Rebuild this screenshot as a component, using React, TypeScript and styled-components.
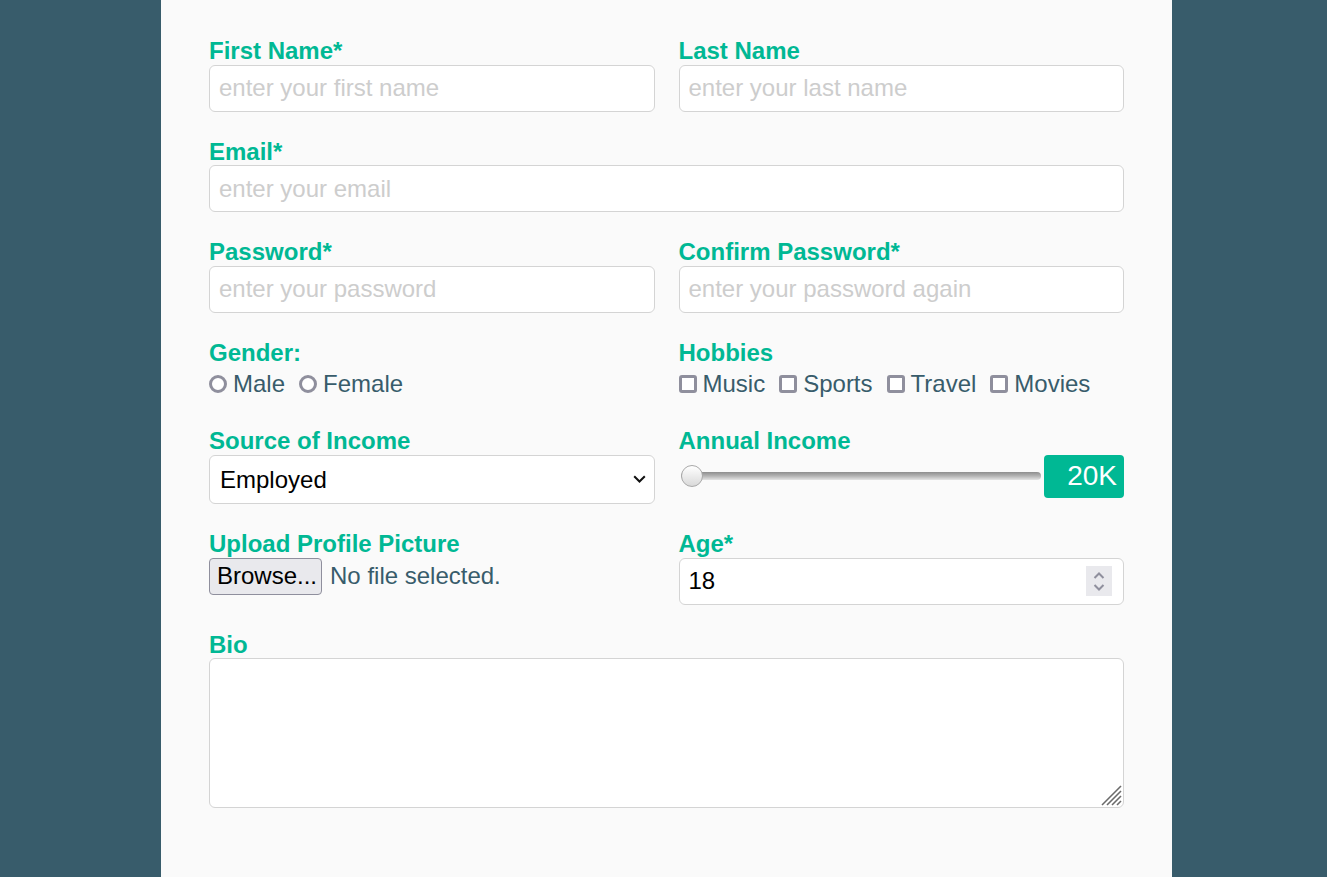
import React from 'react';
import styled, { createGlobalStyle } from 'styled-components';

const GREEN = '#00b894';
const SLATE = '#385c6b';
const FONT = '"Liberation Sans", Arial, sans-serif';

const Global = createGlobalStyle`
  html, body { margin: 0; padding: 0; }
  body { background: ${SLATE}; font-family: ${FONT}; }
  * { box-sizing: border-box; }
`;

const Page = styled.div`
  display: flex;
  justify-content: center;
  padding-left: 6px;
  min-height: 100vh;
`;

const Panel = styled.form`
  width: 1011px;
  min-height: 100vh;
  background: #fafafa;
  padding: 37px 48px 40px;
`;

const Grid = styled.div`
  display: grid;
  grid-template-columns: 1fr 1fr;
  column-gap: 24px;
  row-gap: 26px;
  align-items: start;
`;

const Field = styled.div<{ $wide?: boolean }>`
  display: flex;
  flex-direction: column;
  min-width: 0;
  grid-column: ${(p) => (p.$wide ? '1 / -1' : 'auto')};
`;

const Label = styled.label`
  color: ${GREEN};
  font-weight: 700;
  font-size: 24px;
  line-height: 27.6px;
`;

const boxBorder = `
  border: 1px solid #d4d4d4;
  border-radius: 6px;
  background: #fff;
`;

const TextInput = styled.input`
  ${boxBorder}
  width: 100%;
  height: 47px;
  padding: 0 9px;
  font: 24px ${FONT};
  color: #000;
  outline: none;
  &::placeholder { color: #cdcdcd; }
`;

const Options = styled.div`
  display: flex;
  align-items: center;
  gap: 14px;
  height: 35px;
`;

const Option = styled.label`
  display: flex;
  align-items: center;
  gap: 6px;
  font-size: 24px;
  line-height: 27.6px;
  color: ${SLATE};
`;

const Radio = styled.input.attrs({ type: 'radio' })`
  appearance: none;
  margin: 0;
  width: 18px;
  height: 18px;
  border: 3px solid #8f8f9d;
  border-radius: 50%;
  background: #fff;
  flex: none;
`;

const Check = styled.input.attrs({ type: 'checkbox' })`
  appearance: none;
  margin: 0;
  width: 18px;
  height: 18px;
  border: 3px solid #8f8f9d;
  border-radius: 3px;
  background: #fff;
  flex: none;
`;

const SelectWrap = styled.div`
  position: relative;
`;

const Select = styled.select`
  ${boxBorder}
  appearance: none;
  width: 100%;
  height: 49px;
  padding: 0 10px;
  font: 24px ${FONT};
  color: #000;
  outline: none;
`;

const Chevron = styled.svg`
  position: absolute;
  right: 9px;
  top: 50%;
  transform: translateY(-50%);
  pointer-events: none;
`;

const SliderRow = styled.div`
  display: flex;
  align-items: center;
  gap: 3px;
  height: 43px;
`;

const Range = styled.input.attrs({ type: 'range' })`
  appearance: none;
  -webkit-appearance: none;
  flex: 1;
  margin: 0 0 0 2px;
  height: 24px;
  background: transparent;
  &::-webkit-slider-runnable-track {
    height: 8px;
    border-radius: 4px;
    background: linear-gradient(to bottom, #8e8e8e 0%, #b4b4b4 50%, #e4e4e4 100%);
  }
  &::-webkit-slider-thumb {
    -webkit-appearance: none;
    appearance: none;
    width: 22px;
    height: 22px;
    margin-top: -7px;
    border-radius: 50%;
    border: 1px solid #a9a9a9;
    background: linear-gradient(to bottom, #ffffff, #d9d9d9);
  }
`;

const Badge = styled.output`
  display: flex;
  align-items: center;
  justify-content: flex-end;
  width: 80px;
  height: 43px;
  padding-right: 7px;
  border-radius: 4px;
  background: ${GREEN};
  color: #fff;
  font-size: 28px;
`;

const FileRow = styled.div`
  display: flex;
  align-items: center;
  gap: 8px;
`;

const BrowseButton = styled.button`
  height: 37px;
  padding: 0 4px 0 7px;
  border: 1px solid #8f8f9d;
  border-radius: 4px;
  background: #e9e9ed;
  color: #000;
  font: 24px ${FONT};
`;

const FileText = styled.span`
  font-size: 24px;
  color: ${SLATE};
`;

const NumberBox = styled.div`
  ${boxBorder}
  display: flex;
  align-items: center;
  height: 47px;
  padding: 0 11px 0 8px;
`;

const NumberInput = styled.input.attrs({ type: 'number' })`
  flex: 1;
  min-width: 0;
  border: none;
  outline: none;
  background: transparent;
  font: 24px ${FONT};
  color: #000;
  padding: 0 0 0 1px;
  -moz-appearance: textfield;
  &::-webkit-inner-spin-button,
  &::-webkit-outer-spin-button {
    -webkit-appearance: none;
    margin: 0;
  }
`;

const Spinner = styled.div`
  display: flex;
  flex-direction: column;
  align-items: center;
  justify-content: center;
  gap: 5px;
  width: 26px;
  height: 30px;
  background: #e9e9ed;
  flex: none;
`;

const AreaWrap = styled.div`
  position: relative;
`;

const TextArea = styled.textarea`
  ${boxBorder}
  display: block;
  width: 100%;
  height: 150px;
  resize: none;
  padding: 8px 9px;
  font: 24px ${FONT};
  outline: none;
`;

const Grip = styled.svg`
  position: absolute;
  right: 2px;
  bottom: 2px;
  pointer-events: none;
`;

export default function App() {
  return (
    <>
      <Global />
      <Page>
        <Panel onSubmit={(e) => e.preventDefault()}>
          <Grid>
            <Field>
              <Label>First Name*</Label>
              <TextInput placeholder="enter your first name" />
            </Field>
            <Field>
              <Label>Last Name</Label>
              <TextInput placeholder="enter your last name" />
            </Field>
            <Field $wide>
              <Label>Email*</Label>
              <TextInput placeholder="enter your email" />
            </Field>
            <Field>
              <Label>Password*</Label>
              <TextInput type="password" placeholder="enter your password" />
            </Field>
            <Field>
              <Label>Confirm Password*</Label>
              <TextInput type="password" placeholder="enter your password again" />
            </Field>
            <Field>
              <Label>Gender:</Label>
              <Options>
                <Option><Radio name="g" />Male</Option>
                <Option><Radio name="g" />Female</Option>
              </Options>
            </Field>
            <Field>
              <Label>Hobbies</Label>
              <Options>
                <Option><Check />Music</Option>
                <Option><Check />Sports</Option>
                <Option><Check />Travel</Option>
                <Option><Check />Movies</Option>
              </Options>
            </Field>
            <Field>
              <Label>Source of Income</Label>
              <SelectWrap>
                <Select defaultValue="Employed">
                  <option>Employed</option>
                  <option>Self-employed</option>
                  <option>Student</option>
                </Select>
                <Chevron width="13" height="8" viewBox="0 0 13 8">
                  <path d="M1.2 1.2 L6.5 6.5 L11.8 1.2" fill="none" stroke="#111" strokeWidth="2" />
                </Chevron>
              </SelectWrap>
            </Field>
            <Field>
              <Label>Annual Income</Label>
              <SliderRow>
                <Range min={20} max={200} defaultValue={20} />
                <Badge>20K</Badge>
              </SliderRow>
            </Field>
            <Field>
              <Label>Upload Profile Picture</Label>
              <FileRow>
                <BrowseButton type="button">Browse...</BrowseButton>
                <FileText>No file selected.</FileText>
              </FileRow>
            </Field>
            <Field>
              <Label>Age*</Label>
              <NumberBox>
                <NumberInput defaultValue={18} />
                <Spinner>
                  <svg width="12" height="7" viewBox="0 0 12 7">
                    <path d="M1.5 6 L6 1.5 L10.5 6" fill="none" stroke="#8f8f9d" strokeWidth="2" />
                  </svg>
                  <svg width="12" height="7" viewBox="0 0 12 7">
                    <path d="M1.5 1 L6 5.5 L10.5 1" fill="none" stroke="#8f8f9d" strokeWidth="2" />
                  </svg>
                </Spinner>
              </NumberBox>
            </Field>
            <Field $wide>
              <Label>Bio</Label>
              <AreaWrap>
                <TextArea />
                <Grip width="22" height="22" viewBox="0 0 22 22">
                  <g stroke="#6b6b6b" strokeWidth="1.6">
                    <line x1="2" y1="21" x2="21" y2="2" />
                    <line x1="7" y1="21" x2="21" y2="7" />
                    <line x1="12" y1="21" x2="21" y2="12" />
                    <line x1="17" y1="21" x2="21" y2="17" />
                  </g>
                </Grip>
              </AreaWrap>
            </Field>
          </Grid>
        </Panel>
      </Page>
    </>
  );
}
